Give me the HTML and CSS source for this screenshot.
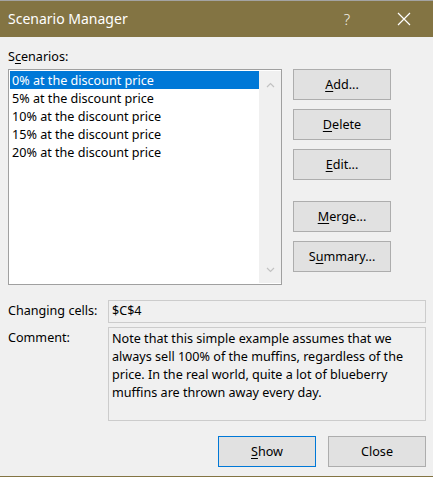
FILE: index.html
```html
<!DOCTYPE html>
<html>
<head>
<meta charset="utf-8">
<link rel="stylesheet" href="styles.css">
</head>
<body>
<div class="dialog">
  <div class="titlebar">
    <span class="title">Scenario Manager</span>
    <span class="help">?</span>
    <span class="close">
      <svg width="14" height="14" viewBox="0 0 14 14"><path d="M1 1 L13 13 M13 1 L1 13" stroke="#fff" stroke-width="1.2" fill="none"/></svg>
    </span>
  </div>
  <div class="content">
    <div class="label-scen">S<u>c</u>enarios:</div>
    <div class="main">
      <div class="listbox">
        <div class="items">
          <div class="item sel">0% at the discount price</div>
          <div class="item">5% at the discount price</div>
          <div class="item">10% at the discount price</div>
          <div class="item">15% at the discount price</div>
          <div class="item">20% at the discount price</div>
        </div>
        <div class="scrollbar">
          <svg width="9" height="6" viewBox="0 0 9 6"><path d="M1 5 L4.5 1.5 L8 5" stroke="#c2c2c2" stroke-width="1.2" fill="none"/></svg>
          <svg width="9" height="6" viewBox="0 0 9 6"><path d="M1 1 L4.5 4.5 L8 1" stroke="#c2c2c2" stroke-width="1.2" fill="none"/></svg>
        </div>
      </div>
      <div class="buttons">
        <div class="group">
          <div class="btn"><u>A</u>dd...</div>
          <div class="btn"><u>D</u>elete</div>
          <div class="btn"><u>E</u>dit...</div>
        </div>
        <div class="group">
          <div class="btn"><u>M</u>erge...</div>
          <div class="btn">S<u>u</u>mmary...</div>
        </div>
      </div>
    </div>
    <div class="row row-cells">
      <div class="lbl">Changing cells:</div>
      <div class="field cells">$C$4</div>
    </div>
    <div class="row row-comment">
      <div class="lbl">Comment:</div>
      <div class="field comment">Note that this simple example assumes that we always sell 100% of the muffins, regardless of the price. In the real world, quite a lot of blueberry muffins are thrown away every day.</div>
    </div>
    <div class="footer">
      <div class="btn default"><u>S</u>how</div>
      <div class="btn">Close</div>
    </div>
  </div>
</div>
</body>
</html>
```

FILE: styles.css
```css
* { box-sizing: border-box; }
html, body { margin: 0; padding: 0; }
body {
  background: #f0f0f0;
  font-family: "Noto Sans", "Open Sans", "DejaVu Sans", sans-serif;
  font-size: 12.6px;
  color: #000;
  width: 433px;
  height: 477px;
  overflow: hidden;
}
.dialog {
  width: 433px;
  height: 477px;
  display: flex;
  flex-direction: column;
  border-bottom: 1px solid #837443;
}
.titlebar {
  height: 37px;
  flex: none;
  border-top: 1px solid #a3a3a3;
  background: #837443;
  color: #fff;
  display: flex;
  align-items: center;
  padding-left: 8px;
}
.title { font-size: 14px; flex: 1; padding-bottom: 1px; }
.help { font-size: 15px; font-weight: 300; width: 30px; margin-right: 26px; text-align: center; color: #f4f1e8; }
.close { width: 32px; margin-right: 13px; display: flex; justify-content: center; }
.content {
  flex: 1;
  padding: 0 7px 0 8px;
  display: flex;
  flex-direction: column;
}
.label-scen { margin-top: 12px; line-height: 16px; height: 20px; }
u { text-decoration: underline; text-underline-offset: 2px; }
.main { display: flex; gap: 11px; }
.listbox {
  width: 274px;
  height: 216px;
  border: 1px solid #a0a0a0;
  background: #fff;
  display: flex;
  padding: 1px 0 1px 1px;
}
.items { flex: 1; }
.item {
  height: 18px;
  line-height: 19px;
  padding-left: 2px;
}
.item.sel { background: #0078d7; color: #fff; }
.scrollbar {
  width: 22px;
  background: #f0f0f0;
  display: flex;
  flex-direction: column;
  justify-content: space-between;
  align-items: center;
  padding: 11px 0 10px;
}
.buttons { display: flex; flex-direction: column; gap: 21px; }
.group { display: flex; flex-direction: column; gap: 9px; }
.btn {
  width: 98px;
  height: 31px;
  background: #e1e1e1;
  border: 1px solid #adadad;
  display: flex;
  align-items: center;
  justify-content: center;
  padding-bottom: 1px;
}
.row { display: flex; }
.lbl { width: 100px; line-height: 18px; }
.row-cells { margin-top: 15px; }
.row-cells .lbl { padding-top: 2px; }
.field {
  width: 318px;
  border: 1px solid #cccccc;
  background: #f0f0f0;
  padding: 0 3px;
  line-height: 18px;
}
.cells { height: 23px; padding-top: 1px; }
.row-comment { margin-top: 4px; }
.comment { height: 94px; padding-top: 2px; }
.row-comment .lbl { padding-top: 2px; }
.footer {
  margin-top: 15px;
  display: flex;
  justify-content: flex-end;
  gap: 12px;
}
.footer .btn { width: 98px; }
.btn.default { border-color: #0078d7; }
```
